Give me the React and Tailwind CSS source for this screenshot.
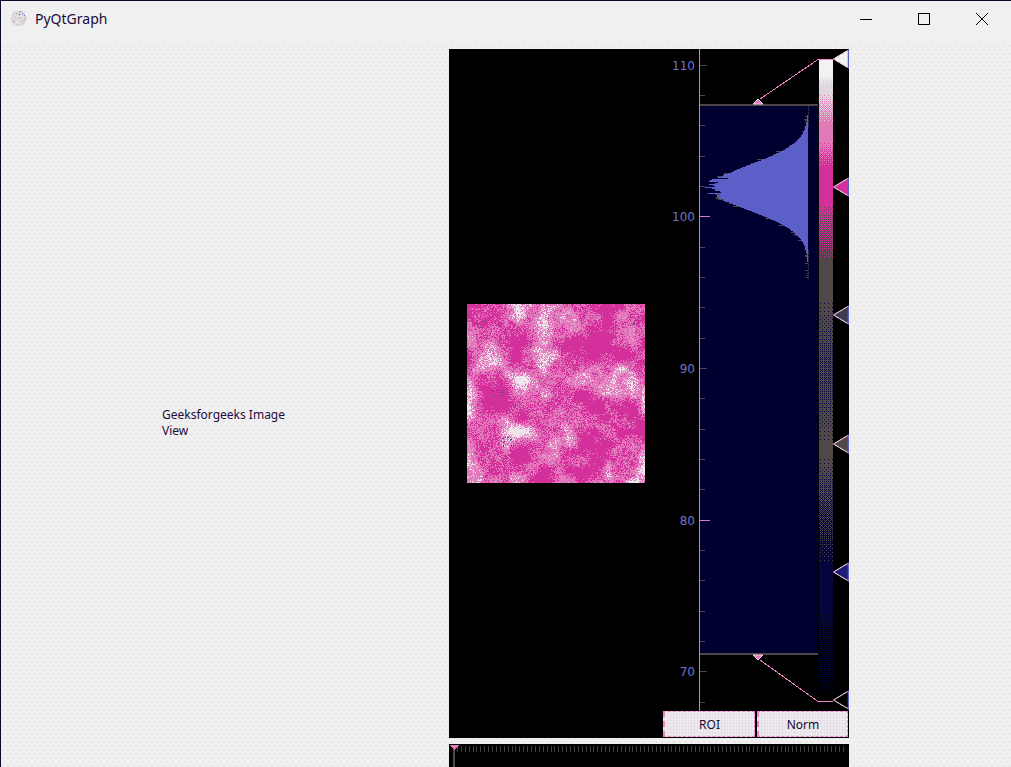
import React from "react";

// seeded rng so the picture is the same every run
function rng(seed) {
  let a = seed;
  return () => {
    a = (a + 0x6d2b79f5) | 0;
    let t = Math.imul(a ^ (a >>> 15), 1 | a);
    t = (t + Math.imul(t ^ (t >>> 7), 61 | t)) ^ t;
    return ((t ^ (t >>> 14)) >>> 0) / 4294967296;
  };
}

function pixelPaths(pixels) {
  const byColor = {};
  pixels.forEach(([x, y, c]) => {
    byColor[c] = (byColor[c] || "") + `M${x} ${y}h1v1h-1z`;
  });
  return Object.entries(byColor);
}

// noise image, 178x179 px
function buildImage() {
  const r = rng(7);
  const grids = [7, 14, 28].map((n) => {
    const g = [];
    for (let i = 0; i < (n + 2) * (n + 2); i++) g.push(r());
    return { n, g };
  });
  const smooth = (t) => t * t * (3 - 2 * t);
  const sample = ({ n, g }, u, v) => {
    const x = u * n;
    const y = v * n;
    const xi = Math.floor(x);
    const yi = Math.floor(y);
    const fx = smooth(x - xi);
    const fy = smooth(y - yi);
    const at = (a, b) => g[b * (n + 2) + a];
    const top = at(xi, yi) * (1 - fx) + at(xi + 1, yi) * fx;
    const bot = at(xi, yi + 1) * (1 - fx) + at(xi + 1, yi + 1) * fx;
    return top * (1 - fy) + bot * fy;
  };
  const pixels = [];
  for (let y = 0; y < 179; y++) {
    for (let x = 0; x < 178; x++) {
      const v =
        sample(grids[0], x / 178, y / 179) * 0.45 +
        sample(grids[1], x / 178, y / 179) * 0.35 +
        sample(grids[2], x / 178, y / 179) * 0.2 +
        (r() - 0.5) * 0.3;
      let c = null;
      if (v > 0.76) c = "#f0e6ee";
      else if (v > 0.71) c = "#e8b4d6";
      else if (v > 0.47) c = "#e377bb";
      if (c) pixels.push([467 + x, 304 + y, c]);
    }
  }
  // dark specks
  const spots = [[506, 440, 6, 14], [552, 316, 5, 3], [636, 316, 8, 8], [480, 324, 4, 3], [500, 392, 3, 4], [642, 362, 3, 3], [494, 391, 4, 4]];
  spots.forEach(([cx, cy, s, n]) => {
    for (let i = 0; i < n; i++) {
      pixels.push([Math.round(cx + (r() - 0.5) * s * 2), Math.round(cy + (r() - 0.5) * s * 2), "#2c4f5c"]);
    }
  });
  return pixelPaths(pixels);
}

// colour bar, dithered between neighbouring palette entries
const PALETTE = ["#f2f2f2", "#dfd6df", "#e37ab8", "#d42f9a", "#504848", "#06063f", "#000000"];
const BAR_STOPS = [
  [59, 0], [75, 0], [85, 1], [92, 1], [123, 2], [140, 2], [167, 3], [202, 3], [260, 4], [295, 4],
  [370, 4.35], [435, 4.05], [455, 4], [565, 5], [610, 5], [695, 6], [711, 6],
];
const BAYER = [0, 8, 2, 10, 12, 4, 14, 6, 3, 11, 1, 9, 15, 7, 13, 5];

function barIndex(y) {
  for (let i = 1; i < BAR_STOPS.length; i++) {
    const [y0, p0] = BAR_STOPS[i - 1];
    const [y1, p1] = BAR_STOPS[i];
    if (y <= y1) return p0 + ((p1 - p0) * (y - y0)) / (y1 - y0);
  }
  return 6;
}

function buildBar() {
  const pixels = [];
  for (let y = 59; y < 700; y++) {
    for (let x = 819; x < 833; x++) {
      const p = barIndex(y);
      const t = (BAYER[(y % 4) * 4 + (x % 4)] + 0.5) / 16;
      pixels.push([x, y, PALETTE[Math.min(6, Math.floor(p + t))]]);
    }
  }
  return pixelPaths(pixels);
}

function buildHistogram() {
  const r = rng(21);
  const rows = [];
  for (let y = 106; y < 279; y++) {
    const d = y - 187;
    const sigma = d < 0 ? 22.4 : 22.8;
    let w = 98 * Math.exp(-(d * d) / (2 * sigma * sigma));
    if (Math.abs(d) < 10) w -= r() * 16 - 5;
    else if (Math.abs(d) < 18) w += r() * 4 - 2;
    const maxCap = Math.abs(d) < 40 ? 6 : 2;
    rows.push({ y, x: Math.round(808 - w), cap: r() < 0.22 ? Math.round(1 + r() * maxCap) : 0 });
  }
  return rows;
}

const IMAGE = buildImage();
const BAR = buildBar();
const HIST = buildHistogram();
const TICKS = Array.from({ length: 22 }, (_, k) => Math.round(64.7 + 30.33 * k));
const LABELS = [["110", 65], ["100", 216], ["90", 368], ["80", 520], ["70", 671]];
const GRADIENT_HANDLES = [
  { y: 59, fill: "#f2f2f2" },
  { y: 187, fill: "#d42f9a" },
  { y: 315, fill: "#3f3a52" },
  { y: 444, fill: "#504848" },
  { y: 572, fill: "#1c1c78" },
  { y: 700, fill: "#000000" },
];

function GradientHandle({ y, fill }) {
  const points = `833.5,${y} 848.5,${y - 9} 848.5,${y + 9}`;
  return (
    <g>
      <polygon points={points} fill={fill} stroke="#ffffff" strokeWidth="1" />
      <polygon points={points} fill="none" stroke="#e377bb" strokeWidth="1" strokeDasharray="2 3" />
      <line x1="848.5" y1={y - 9} x2="848.5" y2={y + 9} stroke="#5b5fc7" strokeWidth="1.5" />
    </g>
  );
}

function PlotDrawing() {
  return (
    <svg viewBox="449 49 400 662" width="400" height="662" className="block" style={{ overflow: "hidden" }}>
      <g shapeRendering="crispEdges">
        <rect x="467" y="304" width="178" height="179" fill="#d4309c" />
        {IMAGE.map(([c, d]) => (
          <path key={c} d={d} fill={c} />
        ))}

        <rect x="700" y="105" width="118" height="549" fill="#000030" />
        {HIST.map((row) => (
          <g key={row.y}>
            {row.x < 808 ? <rect x={row.x} y={row.y} width={808 - row.x} height="1" fill="#5b5fc7" /> : null}
            {row.cap > 0 ? <rect x={Math.max(row.x - row.cap, 700)} y={row.y} width={row.cap} height="1" fill="#504848" /> : null}
            {row.x >= 806 && row.y % 2 === 0 ? <rect x="808" y={row.y} width="1" height="1" fill="#504848" /> : null}
          </g>
        ))}
        <rect x="700" y="104" width="118" height="2" fill="#4e4646" />
        <rect x="700" y="653" width="118" height="2" fill="#4e4646" />

        {BAR.map(([c, d]) => (
          <path key={c} d={d} fill={c} />
        ))}

        {/* axis */}
        <rect x="699" y="49" width="1" height="662" fill="#ee80c4" />
        <line x1="699.5" y1="49" x2="699.5" y2="711" stroke="#8a7ae8" strokeDasharray="1 2" />
        {TICKS.map((y, k) => {
          const special = k === 5 || k === 15;
          const major = k % 5 === 0;
          return (
            <rect
              key={y}
              x="700"
              y={y}
              width={special ? 10 : major ? 7 : 5}
              height="1"
              fill={special ? "#e377bb" : "#504848"}
            />
          );
        })}

        <rect x="818" y="59" width="15" height="1" fill="#ee80c4" />
        <rect x="818" y="701" width="15" height="1" fill="#ee80c4" />
        <line x1="760" y1="99" x2="818" y2="59.5" stroke="#ee80c4" strokeWidth="1" />
        <line x1="760" y1="660" x2="818" y2="701.5" stroke="#ee80c4" strokeWidth="1" />
      </g>

      {LABELS.map(([t, y]) => (
        <text key={t} x="695" y={y + 5} textAnchor="end" fontSize="12" fill="#7272cc" className="font-['DejaVu_Sans',sans-serif]">
          {t}
        </text>
      ))}

      <polygon points="758,99 753,104 763,104" fill="#e377bb" stroke="#f5d5e8" strokeWidth="1" />
      <polygon points="758,660 753,655 763,655" fill="#e377bb" stroke="#f5d5e8" strokeWidth="1" />

      {GRADIENT_HANDLES.map((h) => (
        <GradientHandle key={h.y} {...h} />
      ))}
    </svg>
  );
}

function PlotButton({ width, children }) {
  return (
    <button
      className="h-[26px] border border-l-2 border-dashed border-l-[#ee80c4] border-[#ee80c4] bg-[#e6e0e6] bg-[radial-gradient(circle_at_1px_1px,#f0ecf0_0.8px,transparent_1px)] bg-[length:3px_3px] pt-[1px] text-center text-[12px] leading-[24px] text-[#0e0a30] font-['Noto_Sans',sans-serif]"
      style={{ width }}
    >
      {children}
    </button>
  );
}

function AppIcon() {
  const r = rng(3);
  const dots = [];
  for (let i = 0; i < 70; i++) {
    const a = r() * Math.PI * 2;
    const d = Math.sqrt(r()) * 8;
    dots.push([Math.round(8.5 + Math.cos(a) * d), Math.round(8.5 + Math.sin(a) * d)]);
  }
  return (
    <svg width="18" height="18" viewBox="0 0 18 18" shapeRendering="crispEdges" className="block">
      <circle cx="8.5" cy="8.5" r="8" fill="#e3dfe3" />
      {dots.map(([x, y], i) => (
        <rect key={i} x={x} y={y} width="1" height="1" fill="#c9c3c9" />
      ))}
      <rect x="10" y="1" width="1" height="1" fill="#6a6ad0" />
      <rect x="12" y="3" width="1" height="1" fill="#6a6ad0" />
      <rect x="9" y="4" width="1" height="1" fill="#6a6ad0" />
      <rect x="14" y="5" width="1" height="1" fill="#6a6ad0" />
    </svg>
  );
}

function TitleBar() {
  return (
    <div className="flex h-[44px] items-start bg-[#f0f0f0]">
      <div className="ml-[9px] mr-[7px] mt-[9px]">
        <AppIcon />
      </div>
      <span className="mt-[8px] text-[14px] leading-[20px] text-[#1c0b3f] font-['Noto_Sans',sans-serif]">PyQtGraph</span>
      <div className="ml-auto flex">
        <div className="flex h-[36px] w-[58px] items-center justify-center">
          <svg width="12" height="12" viewBox="0 0 12 12" shapeRendering="crispEdges">
            <rect x="0" y="6" width="12" height="1" fill="#000" />
          </svg>
        </div>
        <div className="flex h-[36px] w-[58px] items-center justify-center">
          <svg width="12" height="12" viewBox="0 0 12 12" shapeRendering="crispEdges">
            <rect x="0.5" y="0.5" width="11" height="11" fill="none" stroke="#000" />
          </svg>
        </div>
        <div className="flex h-[36px] w-[58px] items-center justify-center">
          <svg width="12" height="12" viewBox="0 0 12 12">
            <path d="M0 0L12 12M12 0L0 12" stroke="#000" strokeWidth="1" />
          </svg>
        </div>
      </div>
    </div>
  );
}

export default function App() {
  return (
    <div className="flex h-[767px] w-[1011px] flex-col overflow-hidden border-l border-t border-[#0b0b2b] bg-[#f0f0f0]">
      <TitleBar />
      <div className="flex flex-1 bg-[radial-gradient(circle_at_1px_1px,#e7e7e7_0.8px,transparent_1px),radial-gradient(circle_at_4px_5px,#e7e7e7_0.8px,transparent_1px)] bg-[length:6px_8px]">
        <div className="w-[448px] pl-[161px] pt-[362px]">
          <p className="w-[130px] text-[12px] leading-[16px] text-[#1c0b3f] font-['Noto_Sans',sans-serif]">
            Geeksforgeeks Image View
          </p>
        </div>
        <div className="flex w-[400px] flex-col pt-[4px]">
          <div className="bg-black">
            <PlotDrawing />
            <div className="flex justify-end gap-[2px] pb-[1px] pr-[1px]">
              <PlotButton width={92}>ROI</PlotButton>
              <PlotButton width={91}>Norm</PlotButton>
            </div>
          </div>
          <div className="mt-[6px] flex-1 bg-black">
            <svg viewBox="449 744 400 23" width="400" height="23" className="block" shapeRendering="crispEdges">
              {Array.from({ length: 101 }, (_, i) => (
                <rect key={i} x={Math.round(453 + i * 3.9)} y="746" width="1" height="6" fill="#444040" />
              ))}
              <rect x="453" y="745" width="2" height="22" fill="#504848" />
              <polygon points="450,745 459,745 454.5,750" fill="#e377bb" />
            </svg>
          </div>
        </div>
      </div>
    </div>
  );
}
